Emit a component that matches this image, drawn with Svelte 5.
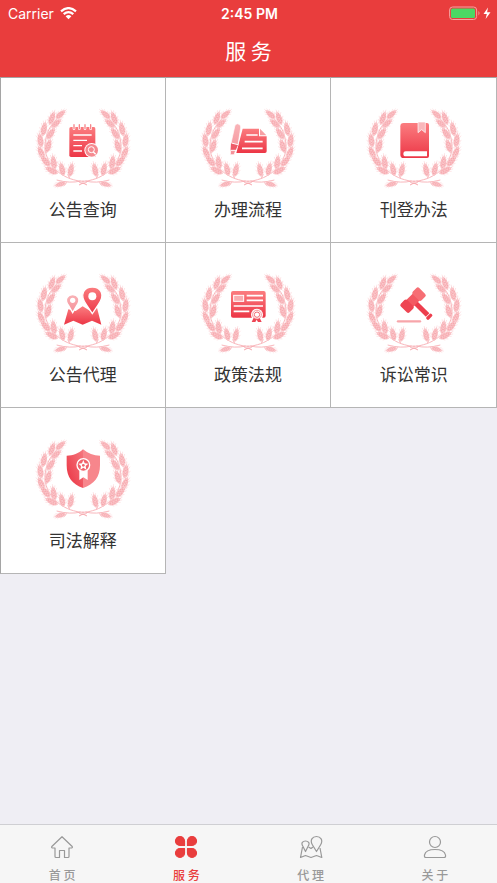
<script>
  const services = [
    { name: '公告查询', icon: 'notice' },
    { name: '办理流程', icon: 'process' },
    { name: '刊登办法', icon: 'book' },
    { name: '公告代理', icon: 'map' },
    { name: '政策法规', icon: 'policy' },
    { name: '诉讼常识', icon: 'gavel' },
    { name: '司法解释', icon: 'shield' }
  ];

  const tabs = [
    { name: '首 页', icon: 'home' },
    { name: '服 务', icon: 'service' },
    { name: '代 理', icon: 'agent' },
    { name: '关 于', icon: 'about' }
  ];

  // x, y, rotation and scale of each ear on the left branch
  const ears = [
    [94, 43, 50, 1],
    [68, 54, 20, 1.1],
    [81, 70, 50, 1],
    [44, 86, 12, 1.15],
    [65, 100, 34, 1.1],
    [33, 120, -8, 1.15],
    [57, 137, 18, 1.15],
    [35, 157, -24, 1.1],
    [48, 183, -40, 1.1],
    [73, 187, -8, 1.15],
    [66, 211, -62, 1.1],
    [98, 207, -14, 1.1],
    [125, 209, 12, 1.1],
    [92, 253, -105, 0.9]
  ];

  let active = $state('service');
</script>

<svg class="defs" aria-hidden="true">
  <defs>
    <linearGradient id="red" x1="0" y1="0" x2="0" y2="1">
      <stop offset="0" stop-color="#fb7d80" />
      <stop offset="1" stop-color="#ec3646" />
    </linearGradient>
    <linearGradient id="pale" x1="0" y1="0" x2="0" y2="1">
      <stop offset="0" stop-color="#f9b4b8" />
      <stop offset="1" stop-color="#f59098" />
    </linearGradient>
    <linearGradient id="left-half" x1="1" y1="0" x2="0" y2="1">
      <stop offset="0" stop-color="#f5777e" />
      <stop offset="1" stop-color="#ea3040" />
    </linearGradient>
    <g id="ear">
      <path d="M0 20C-9 14-9 0-6-8L0-20L6-8C9 0 9 14 0 20Z" fill="#f9bfc3" />
      <path d="M0 18V-24M-6-6L-10-13M6-6L10-13M-8 5L-12-2M8 5L12-2M-4-12L-6-20M4-12L6-20M-6 12L-11 7M6 12L11 7" stroke="#fbd3d6" stroke-width="1.5" />
      <path d="M0 14L-6 7M0 14L6 7M0 7L-7 0M0 7L7 0M0 0L-6-7M0 0L6-7M0-7L-4-13M0-7L4-13" stroke="#f59fa6" stroke-width="2" stroke-dasharray="3 2" />
    </g>
    <g id="branch" fill="none">
      <path d="M91 51C61 73 48 103 47 139C47 183 82 225 132 239Q146 244 164 244M82 240Q122 251 154 243M112 247L105 257M121 235L115 223" stroke="#f9b7bc" stroke-width="3" />
      {#each ears as [x, y, angle, scale]}
        <use href="#ear" transform="translate({x} {y}) rotate({angle}) scale({scale})" />
      {/each}
    </g>
    <g id="wreath">
      <use href="#branch" />
      <use href="#branch" transform="translate(322 0) scale(-1 1)" />
      <path d="M147 244Q161 256 175 244M149 255L161 249L173 255" fill="none" stroke="#f7a9af" stroke-width="3" />
    </g>
  </defs>
</svg>

<div class="page">
  <header>
    <div class="status">
      <div class="carrier">
        <span>Carrier</span>
        <svg class="wifi" viewBox="0 0 17 13" aria-hidden="true">
          <path d="M1 4.4Q8.500-2.200 16 4.400M3.700 7.200Q8.500 3 13.300 7.200" fill="none" stroke="#fff" stroke-width="2.200" />
          <path d="M5.600 9.300Q8.500 6.900 11.400 9.300L8.500 12.300Z" fill="#fff" />
        </svg>
      </div>
      <time>2:45 PM</time>
      <div class="power">
        <svg viewBox="0 0 42 15" aria-hidden="true">
          <rect x="0.600" y="1" width="27" height="12.500" rx="3" fill="none" stroke="#f4a5a2" />
          <rect x="2" y="2.500" width="24" height="9.500" rx="1.500" fill="#4cd964" />
          <path d="M29.500 5Q31.500 7.200 29.500 9.500Z" fill="#f4a5a2" />
          <path d="M39 1.500L34.500 8H37.800L36.600 13L41.500 6.300H38.100Z" fill="#fff" />
        </svg>
      </div>
    </div>
    <h1>服 务</h1>
  </header>

  <main>
    {#each services as item}
      <button class="cell">
        <svg viewBox="-4 0 330 270" aria-hidden="true">
          <use href="#wreath" />
          {#if item.icon === 'notice'}
            <path d="M125 81H194Q198 81 198 86V171H125Q120 171 120 166V86Q120 81 125 81Z" fill="url(#red)" />
            <path d="M134 74V86M150 74V86M167 74V86M184 74V86" stroke="#fff" stroke-width="8" stroke-linecap="round" />
            <path d="M134 74V86M150 74V86M167 74V86M184 74V86" stroke="#f7868b" stroke-width="4" stroke-linecap="round" />
            <path d="M132 105H187M132 121H173M132 137H158M132 153H158" stroke="#fff" stroke-width="4" />
            <circle cx="187" cy="151" r="22" fill="#fff" />
            <circle cx="187" cy="151" r="19" fill="#f58a90" />
            <circle cx="186" cy="149" r="9" fill="none" stroke="#fff" stroke-width="3" />
            <path d="M192 156L199 163" stroke="#fff" stroke-width="4" />
          {:else if item.icon === 'process'}
            <path d="M145 86H194V109H217V154Q217 159 212 159H126Z" fill="url(#red)" />
            <path d="M197 86L216 106H197Z" fill="#f7a0a4" />
            <path d="M156 105H190M151 125H205M143 145H205" stroke="#fff" stroke-width="5" />
            <path d="M122 76Q128 67 136 74Q140 77 139 84L131 134L119 164H108L110 130Z" fill="url(#pale)" stroke="#fff" stroke-width="2" />
            <path d="M110 128L131 134L124 151L109 151Z" fill="#ee5b68" />
            <path d="M111 129L131 134M110 151H125" stroke="#fff" stroke-width="3" />
          {:else if item.icon === 'book'}
            <path d="M130 69H200Q206 69 206 75V168Q206 174 200 174H130Q120 174 120 164V79Q120 69 130 69Z" fill="url(#red)" />
            <path d="M173 66H195V98L184 89L173 98Z" fill="#f9b7bb" stroke="#fff" stroke-width="2" />
            <path d="M136 154H200V169H136Q129 169 129 161Q129 154 136 154Z" fill="#fff" />
          {:else if item.icon === 'map'}
            <path d="M117 133L139 138L160 124L184 139L203 128L216 179L188 167L160 179L132 167L104 179Z" fill="url(#red)" />
            <path d="M130 143L118 122C103 102 116 89 130 89S157 102 142 122Z" fill="url(#pale)" stroke="#fff" stroke-width="4" />
            <circle cx="130" cy="106" r="8" fill="#fff" />
            <path d="M189 146L171 119C148 87 166 66 189 66S230 87 207 119Z" fill="url(#red)" stroke="#fff" stroke-width="4" />
            <circle cx="189" cy="94" r="12" fill="#fff" />
          {:else if item.icon === 'policy'}
            <rect x="110" y="78" width="104" height="80" rx="6" fill="url(#red)" />
            <rect x="118" y="91" width="30" height="18" fill="#f9adb1" stroke="#fff" stroke-width="3" />
            <path d="M157 92H206M157 106H206M118 123H206M118 139H165" stroke="#fff" stroke-width="5" />
            <circle cx="188" cy="149" r="18" fill="#fff" />
            <path d="M178 158L172 171H183L187 164L191 171H202L196 158Z" fill="#ee4655" />
            <circle cx="188" cy="149" r="13" fill="#fff" stroke="#f26b75" stroke-width="3" stroke-dasharray="3 1" />
            <circle cx="188" cy="149" r="8" fill="none" stroke="#f26b75" stroke-width="3" />
          {:else if item.icon === 'gavel'}
            <path d="M113 169H179" stroke="#f7a5aa" stroke-width="7" stroke-linecap="round" />
            <g transform="rotate(-45 157 106)">
              <rect x="150" y="111" width="15" height="58" fill="#ed3e4d" />
              <path d="M143 92H173V121H143Z" fill="#f35a63" />
              <rect x="119" y="88" width="27" height="37" rx="6" fill="#ee4552" />
              <rect x="170" y="88" width="27" height="37" rx="6" fill="#f66e74" />
              <rect x="147" y="171" width="21" height="10" rx="4" fill="#ed3e4d" />
            </g>
          {:else}
            <path d="M161 55C148 67 131 74 112 74V103C112 139 129 160 161 171Z" fill="url(#left-half)" />
            <path d="M161 55C176 67 193 74 212 74V103C212 139 194 160 161 171Z" fill="#f7868c" />
            <path d="M150 116H175V147L162 139L150 147Z" fill="#fff" />
            <circle cx="162" cy="102" r="19" fill="#f0626b" stroke="#fff" stroke-width="4" />
            <path d="M162 87L166 97L177 98L169 105L171 116L162 110L153 116L155 105L147 98L158 97Z" fill="#fff" />
            <circle cx="162" cy="103" r="4" fill="#f0626b" />
          {/if}
        </svg>
        <span>{item.name}</span>
      </button>
    {/each}
  </main>

  <nav>
    {#each tabs as tab}
      <button class="tab" class:active={active === tab.icon} onclick={() => (active = tab.icon)}>
        <svg viewBox="0 0 24 24" fill="none" stroke="currentColor" stroke-width="1.200" stroke-linejoin="round" aria-hidden="true">
          {#if tab.icon === 'home'}
            <path d="M12 1.700L1.800 11.500Q1.200 12.700 2.500 13H5V21.500Q5 22.500 6 22.500H9.500V15.500H14.500V22.500H18Q19 22.500 19 21.500V13H21.500Q22.800 12.700 22.200 11.500Z" />
          {:else if tab.icon === 'service'}
            <path d="M10.500 10.500H6A4.500 4.500 0 1 1 10.500 6ZM13.500 10.500V6A4.500 4.500 0 1 1 18 10.500ZM10.500 13.500V18A4.500 4.500 0 1 1 6 13.500ZM13.500 13.500H18A4.500 4.500 0 1 1 13.500 18Z" fill="currentColor" />
          {:else if tab.icon === 'agent'}
            <path d="M6.500 16.500L4 11.500C1.500 8 4 6 6.500 6S11.500 8 9 11.500ZM17.500 16.500L13.500 10C10.500 5 13.500 1.500 17.500 1.500S24.500 5 21.500 10Z" />
            <path d="M3.500 12L1.500 22.500L6.500 20.500L12 22.500L17.500 20.500L22.800 22.500L21 13M9.500 12L12 13.500L14 12" />
          {:else}
            <circle cx="12" cy="7" r="5.500" />
            <path d="M3 22.500H21Q23 22.500 22.500 20C21.500 15.500 17 14.500 12 14.500S2.500 15.500 1.500 20Q1 22.500 3 22.500Z" />
          {/if}
        </svg>
        <span>{tab.name}</span>
      </button>
    {/each}
  </nav>
</div>

<style>
  :global(body) {
    margin: 0;
    background: #efeef4;
  }

  .defs {
    position: absolute;
    width: 0;
    height: 0;
  }

  .page {
    display: flex;
    flex-direction: column;
    min-height: 100vh;
    font-family: Inter, "Noto Sans CJK SC", sans-serif;
  }

  button {
    margin: 0;
    padding: 0;
    border: 0;
    border-radius: 0;
    background: none;
    font-family: "Noto Sans CJK SC", sans-serif;
    cursor: pointer;
  }

  header {
    padding-bottom: 9px;
    background: #e93d3d;
    color: #fff;
  }

  .status {
    display: grid;
    grid-template-columns: 1fr auto 1fr;
    align-items: center;
    height: 26px;
    padding: 0 6px 0 8px;
    font-size: 14px;
  }

  .carrier {
    display: flex;
    align-items: center;
    gap: 6px;
  }

  .wifi {
    width: 17px;
    height: 13px;
  }

  time {
    font-weight: 600;
  }

  .power {
    display: flex;
    justify-content: flex-end;
  }

  .power svg {
    width: 42px;
    height: 15px;
  }

  h1 {
    margin: 0;
    padding-top: 6px;
    font-family: "Noto Sans CJK SC", sans-serif;
    font-size: 21px;
    font-weight: 400;
    line-height: 36px;
    text-align: center;
  }

  main {
    display: grid;
    grid-template-columns: repeat(3, 1fr);
    flex: 1;
    align-content: start;
  }

  .cell {
    box-sizing: border-box;
    display: flex;
    flex-direction: column;
    align-items: center;
    justify-content: center;
    gap: 6px;
    aspect-ratio: 1;
    padding-top: 2px;
    border-right: 1px solid #b5b5b5;
    border-bottom: 1px solid #b5b5b5;
    background: #fff;
    color: #333;
    font-size: 17px;
    line-height: 26px;
  }

  .cell:nth-child(3n + 1) {
    border-left: 1px solid #a5a5a5;
  }

  .cell:nth-child(-n + 3) {
    border-top: 1px solid #a5a5a5;
  }

  .cell svg {
    width: 110px;
    height: 90px;
  }

  nav {
    display: flex;
    border-top: 1px solid #cfcfd3;
    background: #f6f6f6;
  }

  .tab {
    display: flex;
    flex: 1;
    flex-direction: column;
    align-items: center;
    gap: 7px;
    padding: 10px 0 0;
    color: #999;
    font-size: 12px;
    font-weight: 500;
    line-height: 17px;
    word-spacing: normal;
  }

  .tab svg {
    width: 24px;
    height: 24px;
  }

  .tab.active {
    color: #e93d3d;
  }
</style>
